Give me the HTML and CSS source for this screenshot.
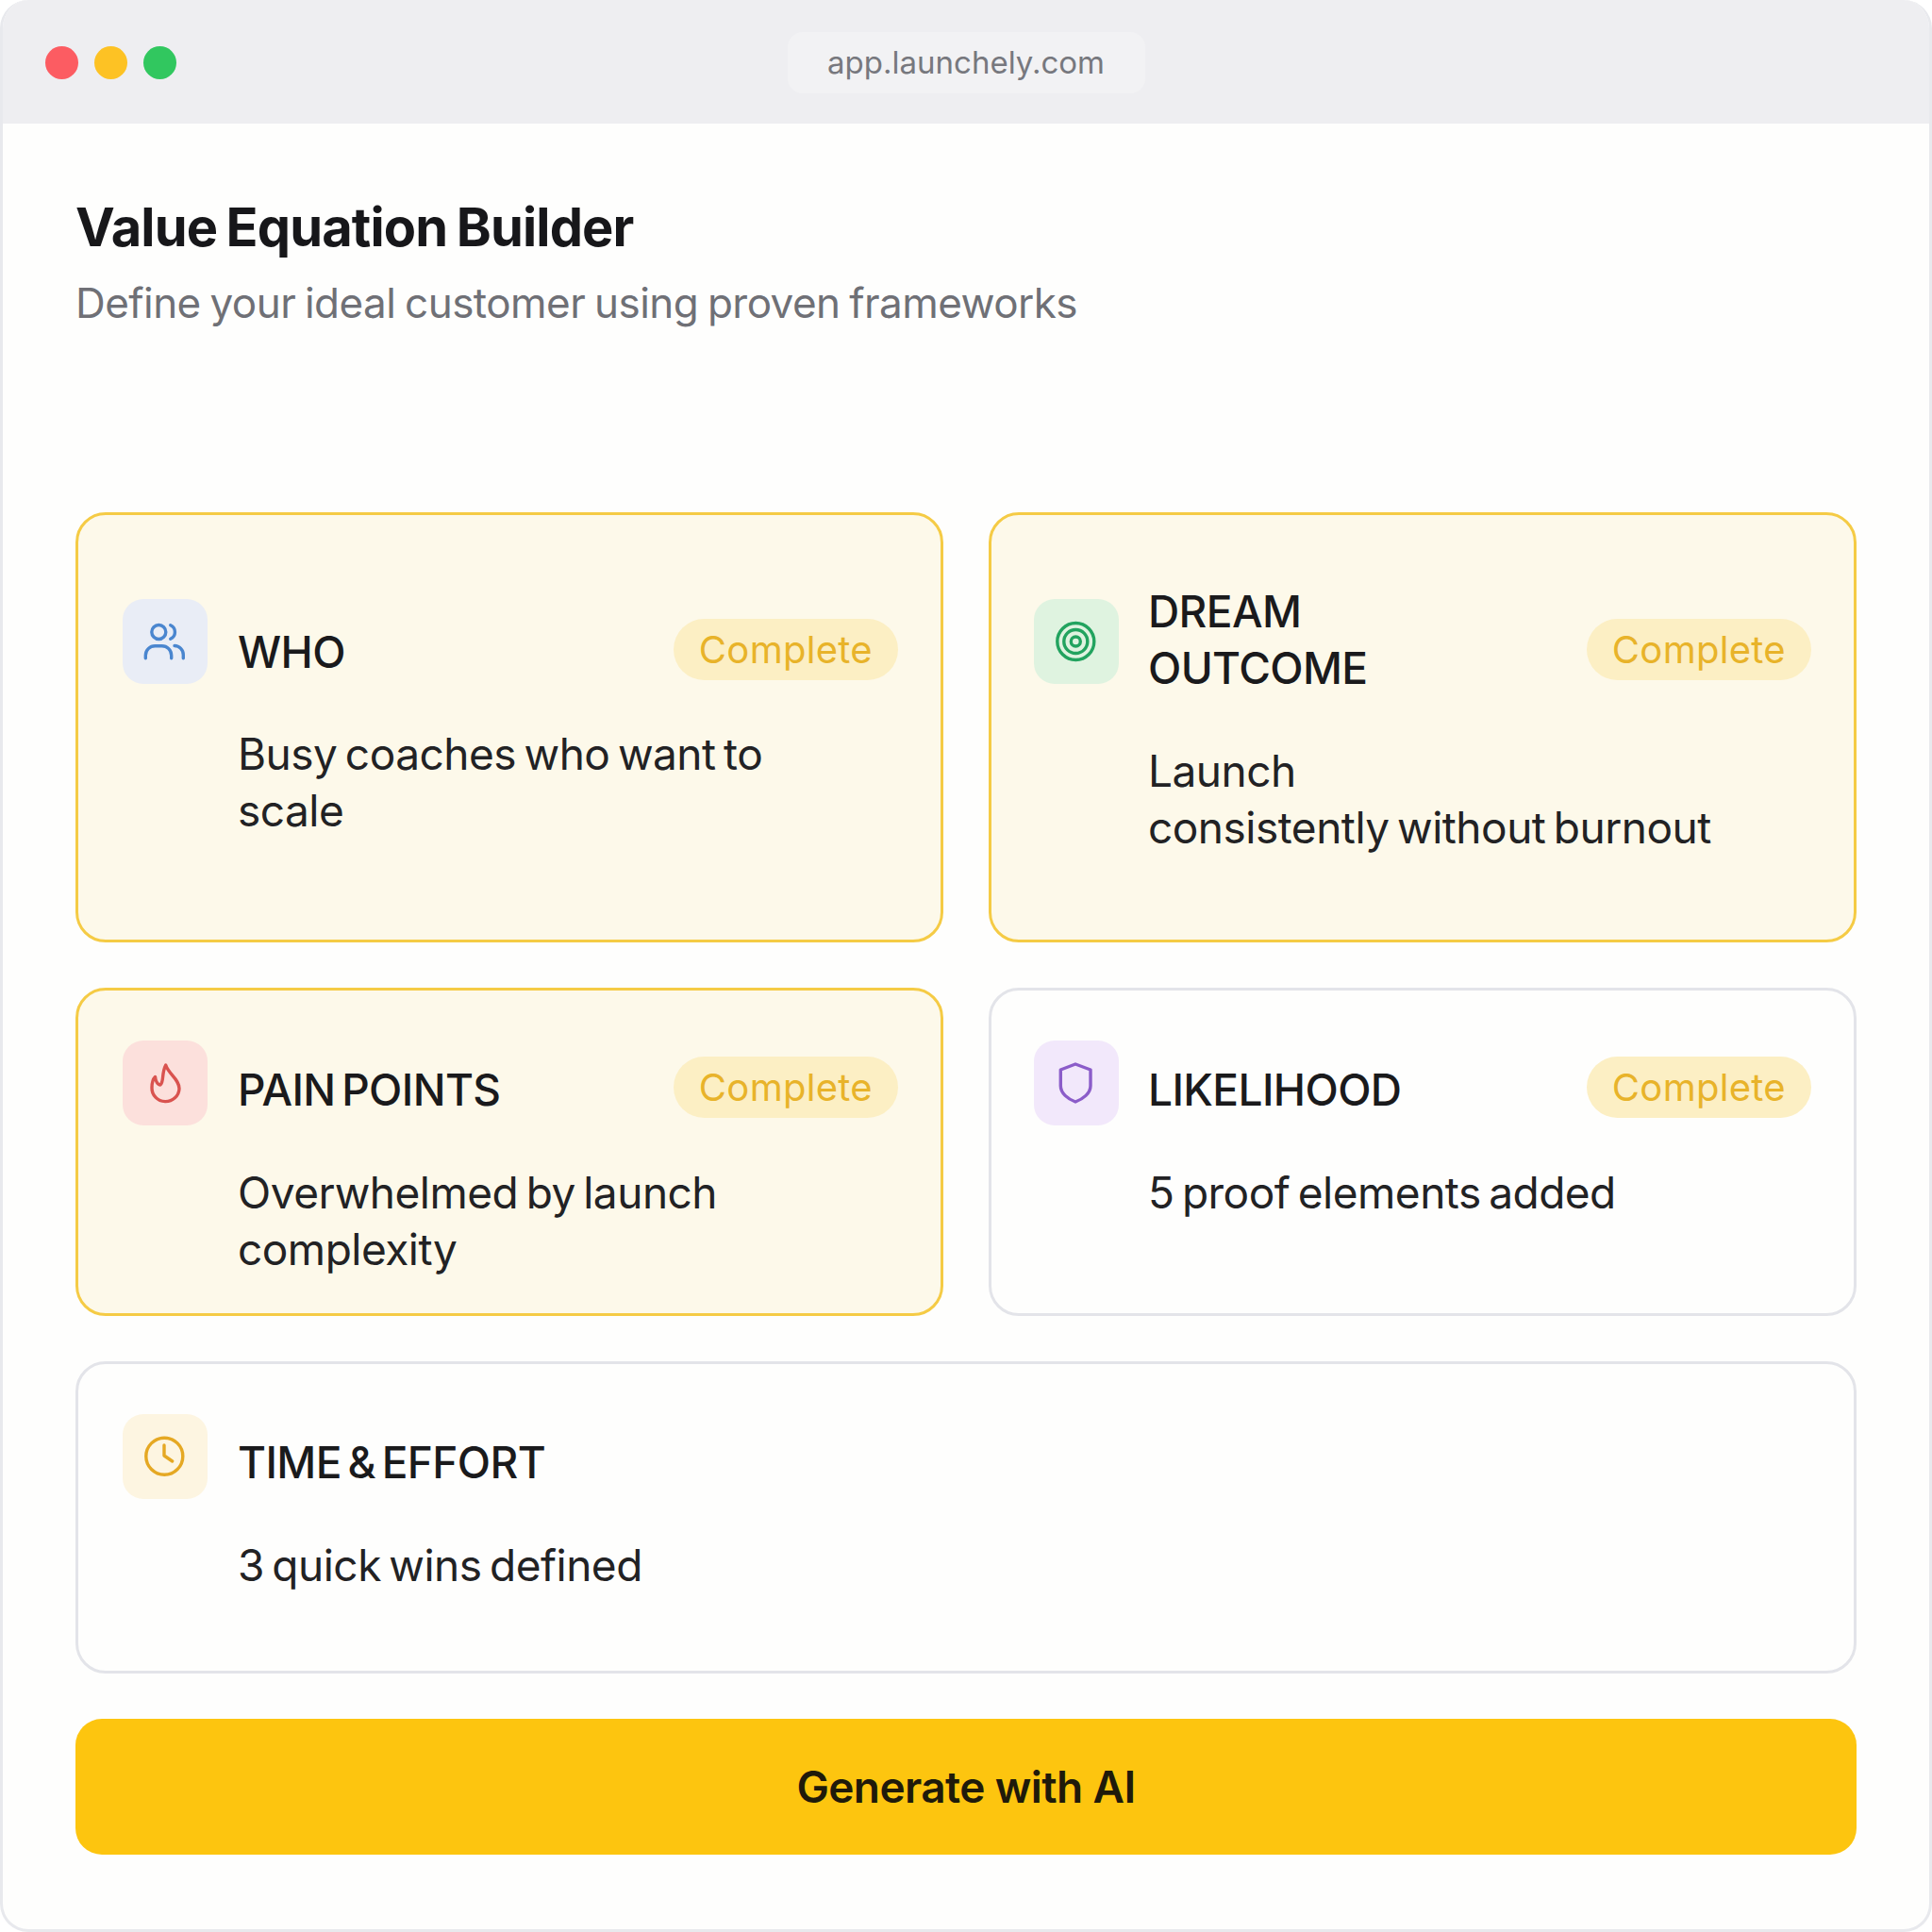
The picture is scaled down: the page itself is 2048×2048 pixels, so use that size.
FILE: index.html
```html
<!DOCTYPE html>
<html lang="en">
<head>
<meta charset="UTF-8">
<meta name="viewport" content="width=device-width, initial-scale=1.0">
<title>Value Equation Builder</title>
<link rel="stylesheet" href="styles.css">
</head>
<body>

<div class="window">
  <div class="titlebar">
    <div class="dots">
      <span class="dot red"></span>
      <span class="dot yellow"></span>
      <span class="dot green"></span>
    </div>
    <div class="url">app.launchely.com</div>
  </div>

  <div class="content">
    <h1>Value Equation Builder</h1>
    <p class="subtitle">Define your ideal customer using proven frameworks</p>

    <div class="grid">
      <div class="card done tall">
        <div class="icon blue">
          <svg viewBox="0 0 90 90"><circle cx="38.3" cy="35" r="7.5"/><path d="M50.7 27.7a8 8 0 0 1 0 14.6"/><path d="M24.3 62.7v-3a10 10 0 0 1 10-10h7.4a10 10 0 0 1 10 10v3"/><path d="M55 49.5a9.5 9.5 0 0 1 9.3 9.5v3.7"/></svg>
        </div>
        <div class="main">
          <div class="head">
            <h2>WHO</h2>
            <span class="badge">Complete</span>
          </div>
          <p class="text">Busy coaches who want to<br>scale</p>
        </div>
      </div>

      <div class="card done tall">
        <div class="icon mint">
          <svg viewBox="0 0 90 90"><circle cx="44.3" cy="45" r="19.5"/><circle cx="44.3" cy="45" r="12.5"/><circle cx="44.3" cy="45" r="5"/></svg>
        </div>
        <div class="main two-line">
          <div class="head">
            <h2>DREAM<br>OUTCOME</h2>
            <span class="badge">Complete</span>
          </div>
          <p class="text">Launch<br>consistently without burnout</p>
        </div>
      </div>

      <div class="card done">
        <div class="icon rose">
          <svg viewBox="0 0 90 90"><path d="M45.7 26C49 36 60 41 60 51A14.4 14 0 0 1 31 50C31 45 32 41 34.5 38.5C35 43 37 47 40 47C44 44 41 35 45.7 26Z"/></svg>
        </div>
        <div class="main">
          <div class="head">
            <h2>PAIN POINTS</h2>
            <span class="badge">Complete</span>
          </div>
          <p class="text">Overwhelmed by launch<br>complexity</p>
        </div>
      </div>

      <div class="card">
        <div class="icon violet">
          <svg viewBox="0 0 90 90"><path d="M44 25L60 31V48C60 56 52 62 44 65C36 62 28.3 56 28.3 48V31Z"/></svg>
        </div>
        <div class="main">
          <div class="head">
            <h2>LIKELIHOOD</h2>
            <span class="badge">Complete</span>
          </div>
          <p class="text">5 proof elements added</p>
        </div>
      </div>

      <div class="card wide">
        <div class="icon amber">
          <svg viewBox="0 0 90 90"><circle cx="44.3" cy="44.7" r="19.5"/><path d="M44 33V44L52.7 50"/></svg>
        </div>
        <div class="main">
          <div class="head">
            <h2>TIME &amp; EFFORT</h2>
          </div>
          <p class="text">3 quick wins defined</p>
        </div>
      </div>
    </div>

    <button class="generate">Generate with AI</button>
  </div>
</div>

</body>
</html>
```

FILE: styles.css
```css
body {
  font-family: Inter, "Noto Sans", sans-serif;
  margin: 0;
  background: #fff;
  color: #1c1c1e;
}

.window {
  box-sizing: border-box;
  width: 2048px;
  height: 2048px;
  background: #fefefd;
  border: 3px solid #e8e9ed;
  border-top: none;
  border-radius: 30px;
  overflow: hidden;
}

.titlebar {
  height: 131px;
  background: #eeeef1;
  position: relative;
  display: flex;
  align-items: center;
  justify-content: center;
}

.dots {
  position: absolute;
  left: 45px;
  top: 49px;
  display: flex;
  gap: 17px;
}

.dot {
  width: 35px;
  height: 35px;
  border-radius: 50%;
}

.red { background: #fc5c62; }
.yellow { background: #fdc224; }
.green { background: #31c75f; }

.url {
  width: 379px;
  height: 65px;
  margin-top: 2px;
  border-radius: 16px;
  background: #f2f2f4;
  color: #77787e;
  font-size: 33px;
  line-height: 65px;
  text-align: center;
}

.content {
  padding: 78px 77px 0;
}

h1 {
  margin: 0;
  font-size: 56px;
  line-height: 64px;
  font-weight: 700;
  letter-spacing: -0.85px;
  word-spacing: -3px;
  color: #17171a;
}

.subtitle {
  margin: 18px 0 192px;
  font-size: 44px;
  line-height: 60px;
  letter-spacing: -0.55px;
  word-spacing: -2px;
  color: #6f7076;
}

.grid {
  display: grid;
  grid-template-columns: 920px 920px;
  grid-template-rows: 456px 348px 331px;
  gap: 48px;
}

.card {
  box-sizing: border-box;
  display: flex;
  gap: 31px;
  padding: 53px 45px;
  border: 3px solid #e3e4e9;
  border-radius: 32px;
}

.card:nth-child(odd) {
  gap: 32px;
  padding-left: 47px;
}

.done {
  background: #fdf9ea;
  border-color: #f5cb45;
}

.card.tall { padding-top: 89px; }
.wide { grid-column: 1 / 3; }

.icon {
  flex: none;
  width: 90px;
  height: 90px;
  border-radius: 22px;
}

.icon svg {
  display: block;
  width: 90px;
  height: 90px;
  fill: none;
  stroke: currentColor;
  stroke-width: 3.4;
  stroke-linecap: round;
  stroke-linejoin: round;
}

.blue { background: #e9edf6; color: #4a86cf; }
.mint { background: #dff3e0; color: #22a35f; }
.rose { background: #fce0dc; color: #d9534f; }
.violet { background: #f2e8fb; color: #8b5cc9; }
.amber { background: #fdf5e1; color: #e5a823; }

.main {
  flex: 1;
  min-width: 0;
  padding-top: 21px;
}

.tall .main { padding-top: 25px; }
.two-line { margin-top: -42px; }

.head {
  display: flex;
  align-items: center;
  justify-content: space-between;
  min-height: 60px;
}

h2 {
  margin: 0;
  font-size: 46px;
  line-height: 60px;
  font-weight: 500;
  letter-spacing: -0.6px;
  word-spacing: -5px;
  color: #1a1a1c;
}

.badge {
  flex: none;
  margin-top: -4px;
  padding: 0 27px;
  height: 65px;
  border-radius: 33px;
  background: #fcefc4;
  color: #e8b32a;
  font-size: 40px;
  line-height: 65px;
  letter-spacing: 0.3px;
}

.two-line .badge { margin-top: 20px; }

.text {
  margin: 49px 0 0;
  font-size: 46px;
  line-height: 60px;
  letter-spacing: -0.5px;
  word-spacing: -4px;
  color: #222224;
}

.tall .text { margin-top: 48px; }
.tall .two-line .text { margin-top: 49px; }

.generate {
  display: block;
  width: 100%;
  height: 144px;
  margin-top: 48px;
  border: none;
  border-radius: 28px;
  background: #fdc50f;
  color: #1f1a0a;
  font-family: inherit;
  font-size: 46px;
  font-weight: 600;
  letter-spacing: -0.6px;
}
```
